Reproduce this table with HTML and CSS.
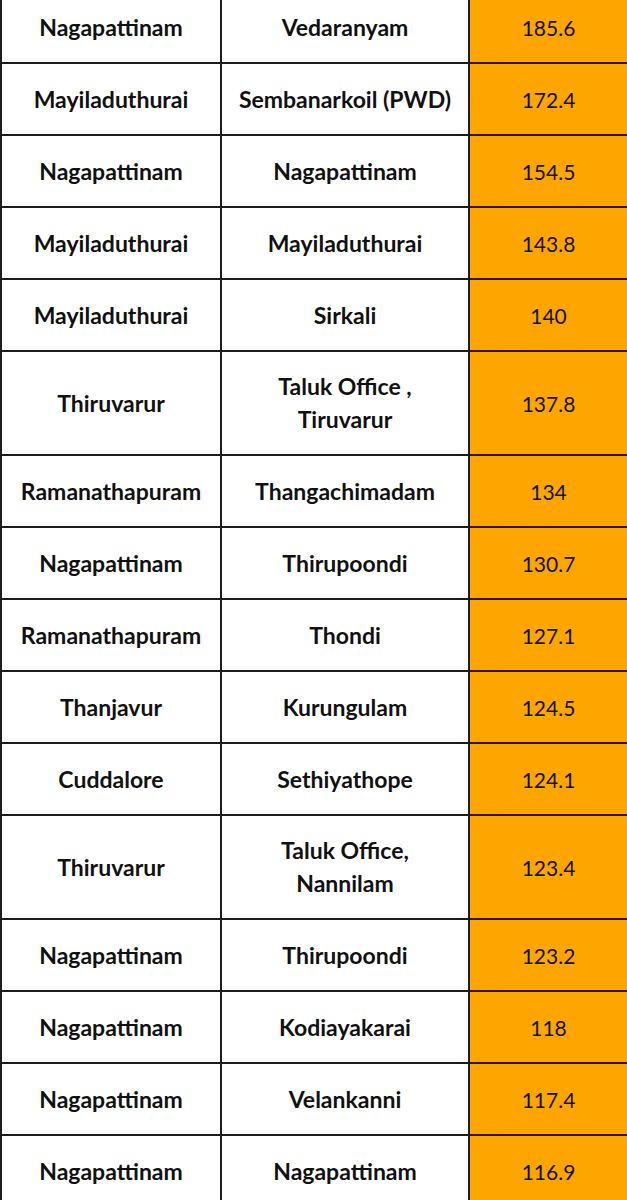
FILE: index.html
```html
<!DOCTYPE html>
<html>
<head>
<meta charset="utf-8">
<link rel="stylesheet" href="styles.css">
</head>
<body>
<table class="rain">
<colgroup><col class="c1"><col class="c2"><col class="c3"></colgroup>
<tbody>
<tr><td class="d">Nagapattinam</td><td class="s">Vedaranyam</td><td class="v">185.6</td></tr>
<tr><td class="d">Mayiladuthurai</td><td class="s">Sembanarkoil (PWD)</td><td class="v">172.4</td></tr>
<tr><td class="d">Nagapattinam</td><td class="s">Nagapattinam</td><td class="v">154.5</td></tr>
<tr><td class="d">Mayiladuthurai</td><td class="s">Mayiladuthurai</td><td class="v">143.8</td></tr>
<tr><td class="d">Mayiladuthurai</td><td class="s">Sirkali</td><td class="v">140</td></tr>
<tr class="tall"><td class="d">Thiruvarur</td><td class="s">Taluk Office ,<br>Tiruvarur</td><td class="v">137.8</td></tr>
<tr><td class="d">Ramanathapuram</td><td class="s">Thangachimadam</td><td class="v">134</td></tr>
<tr><td class="d">Nagapattinam</td><td class="s">Thirupoondi</td><td class="v">130.7</td></tr>
<tr><td class="d">Ramanathapuram</td><td class="s">Thondi</td><td class="v">127.1</td></tr>
<tr><td class="d">Thanjavur</td><td class="s">Kurungulam</td><td class="v">124.5</td></tr>
<tr><td class="d">Cuddalore</td><td class="s">Sethiyathope</td><td class="v">124.1</td></tr>
<tr class="tall"><td class="d">Thiruvarur</td><td class="s">Taluk Office,<br>Nannilam</td><td class="v">123.4</td></tr>
<tr><td class="d">Nagapattinam</td><td class="s">Thirupoondi</td><td class="v">123.2</td></tr>
<tr><td class="d">Nagapattinam</td><td class="s">Kodiayakarai</td><td class="v">118</td></tr>
<tr><td class="d">Nagapattinam</td><td class="s">Velankanni</td><td class="v">117.4</td></tr>
<tr><td class="d">Nagapattinam</td><td class="s">Nagapattinam</td><td class="v">116.9</td></tr>
</tbody>
</table>
</body>
</html>
```
FILE: styles.css
```css
html, body {
  margin: 0;
  padding: 0;
  background: #ffffff;
}
.rain {
  border-collapse: collapse;
  table-layout: fixed;
  width: 627px;
  margin-top: -10px;
  font-family: Lato, "Liberation Sans", sans-serif;
  font-size: 23px;
  color: #111111;
}
.c1 { width: 220px; }
.c2 { width: 248px; }
.c3 { width: 159px; }
.rain td {
  border: 2px solid #1c1c1c;
  height: 70px;
  padding: 0;
  text-align: center;
  vertical-align: middle;
  line-height: 33px;
}
.rain tr.tall td {
  height: 102px;
}
.rain td.d, .rain td.s {
  font-weight: 700;
}
.rain td.v {
  background: #ffa500;
  font-weight: 400;
  font-size: 21px;
}
```
